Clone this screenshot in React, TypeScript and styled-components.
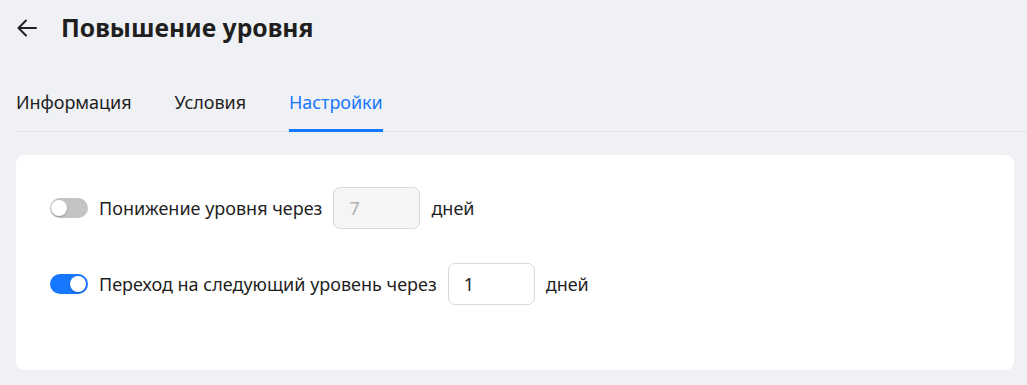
import React, {useState} from 'react';
import styled, {createGlobalStyle} from 'styled-components';

const GlobalStyle = createGlobalStyle`
  body {
    margin: 0;
    background: #f0f1f5;
    font-family: 'Noto Sans', 'Open Sans', sans-serif;
    color: #1f1f1f;
  }
`;

const Page = styled.div`
  padding: 0 13px 15px 16px;
`;

const Header = styled.div`
  display: flex;
  align-items: center;
  height: 56px;
  gap: 23px;
`;

const BackButton = styled.button`
  display: flex;
  align-items: center;
  justify-content: center;
  width: 22px;
  height: 22px;
  padding: 0;
  border: none;
  background: none;
  color: #1f1f1f;
  cursor: pointer;
`;

const Title = styled.h1`
  margin: 0;
  font-size: 24.7px;
  font-weight: 700;
  line-height: 32px;
`;

const Tabs = styled.div`
  display: flex;
  gap: 43px;
  margin-top: 20px;
  margin-right: -13px;
  border-bottom: 1px solid #e3e5ea;
`;

const Tab = styled.div<{$active?: boolean}>`
  padding: 13px 0 14px;
  font-size: 18px;
  line-height: 26px;
  letter-spacing: -0.05px;
  color: ${p => (p.$active ? '#1677ff' : '#1f1f1f')};
  border-bottom: 3px solid ${p => (p.$active ? '#1677ff' : 'transparent')};
  margin-bottom: -1px;
  cursor: pointer;
`;

const Card = styled.div`
  margin-top: 23px;
  background: #fff;
  border-radius: 8px;
  padding: 32px 34px 65px;
  display: flex;
  flex-direction: column;
  gap: 34px;
`;

const Row = styled.div`
  display: flex;
  align-items: center;
  font-size: 18px;
`;

const Track = styled.button<{$on: boolean}>`
  position: relative;
  width: 38px;
  height: 20px;
  padding: 0;
  border: none;
  border-radius: 10px;
  background: ${p => (p.$on ? '#1677ff' : '#c4c4c4')};
  margin-right: 11px;
  cursor: pointer;
  flex-shrink: 0;
`;

const Knob = styled.span<{$on: boolean}>`
  position: absolute;
  top: 2px;
  left: ${p => (p.$on ? '20px' : '1px')};
  width: 16px;
  height: 16px;
  border-radius: 50%;
  background: #fff;
  box-shadow: 0 1px 2px rgba(0, 0, 0, 0.25);
`;

const Label = styled.span`
  margin-right: 11px;
`;

const NumberInput = styled.input`
  box-sizing: border-box;
  width: 87px;
  height: 42px;
  padding: 0 15px;
  border: 1px solid #d9d9d9;
  border-radius: 7px;
  font: inherit;
  font-size: 18px;
  color: #1f1f1f;
  background: #fff;
  margin-right: 11px;
  outline: none;
  &:disabled {
    background: #f5f5f5;
    color: #b0b0b0;
  }
`;

interface SettingRowProps {
  label: string;
  value: string;
  enabled: boolean;
  onToggle: () => void;
}

const SettingRow = ({label, value, enabled, onToggle}: SettingRowProps) => (
  <Row>
    <Track $on={enabled} onClick={onToggle} aria-pressed={enabled}>
      <Knob $on={enabled} />
    </Track>
    <Label>{label}</Label>
    <NumberInput defaultValue={value} disabled={!enabled} />
    <span>дней</span>
  </Row>
);

const App = () => {
  const [downgrade, setDowngrade] = useState(false);
  const [upgrade, setUpgrade] = useState(true);

  return (
    <Page>
      <GlobalStyle />
      <Header>
        <BackButton aria-label="Назад">
          <svg width="20" height="18" viewBox="0 0 20 18" fill="none" stroke="currentColor" strokeWidth="2" strokeLinecap="round" strokeLinejoin="round">
            <path d="M19 9H2M9 1.5L1.5 9L9 16.5" />
          </svg>
        </BackButton>
        <Title>Повышение уровня</Title>
      </Header>
      <Tabs>
        <Tab>Информация</Tab>
        <Tab>Условия</Tab>
        <Tab $active>Настройки</Tab>
      </Tabs>
      <Card>
        <SettingRow
          label="Понижение уровня через"
          value="7"
          enabled={downgrade}
          onToggle={() => setDowngrade(v => !v)}
        />
        <SettingRow
          label="Переход на следующий уровень через"
          value="1"
          enabled={upgrade}
          onToggle={() => setUpgrade(v => !v)}
        />
      </Card>
    </Page>
  );
};

export default App;
